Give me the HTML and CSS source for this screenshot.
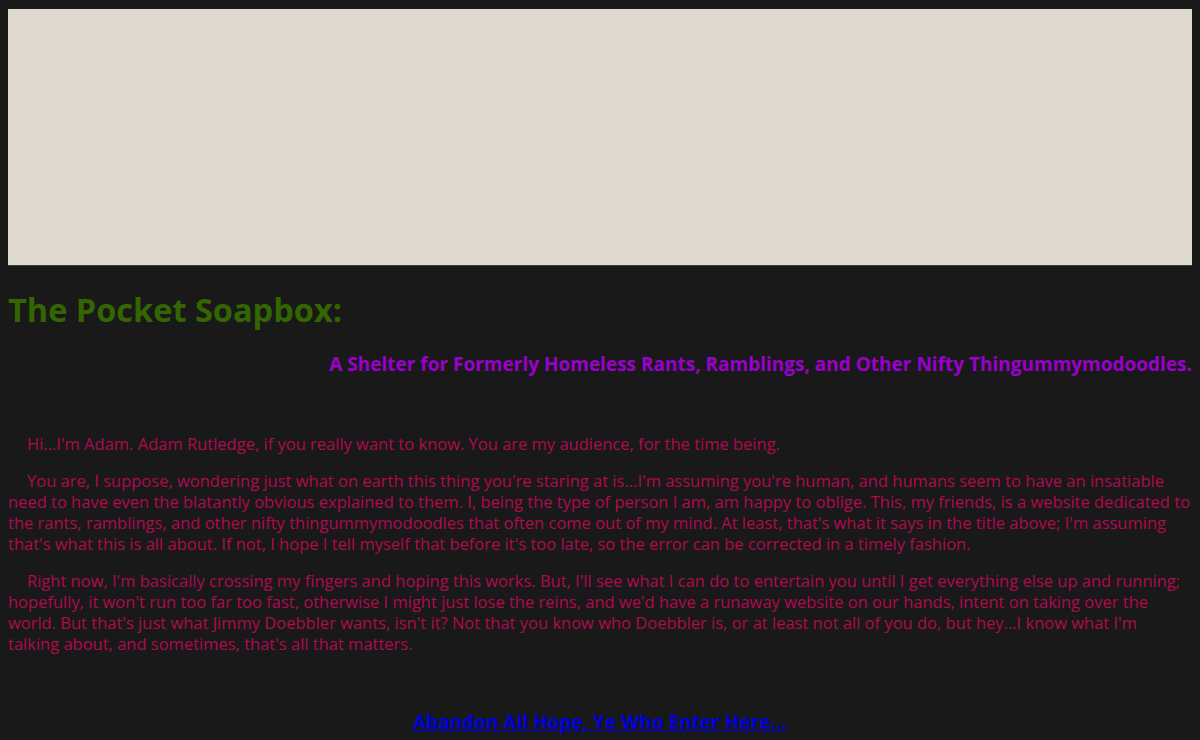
FILE: index.html
```html
<!DOCTYPE html>
<html>
<head>
<meta charset="utf-8">
<link rel="stylesheet" href="styles.css">
</head>
<body>
<div class="banner"></div>
<h1 class="title">The Pocket Soapbox:</h1>
<h3 class="subtitle">A Shelter for Formerly Homeless Rants, Ramblings, and Other Nifty Thingummymodoodles.</h3>
<div class="content">
<p>Hi...I'm Adam. Adam Rutledge, if you really want to know. You are my audience, for the time being.</p>
<p>You are, I suppose, wondering just what on earth this thing you're staring at is...I'm assuming you're human, and humans seem to have an insatiable need to have even the blatantly obvious explained to them. I, being the type of person I am, am happy to oblige. This, my friends, is a website dedicated to the rants, ramblings, and other nifty thingummymodoodles that often come out of my mind. At least, that's what it says in the title above; I'm assuming that's what this is all about. If not, I hope I tell myself that before it's too late, so the error can be corrected in a timely fashion.</p>
<p>Right now, I'm basically crossing my fingers and hoping this works. But, I'll see what I can do to entertain you until I get everything else up and running; hopefully, it won't run too far too fast, otherwise I might just lose the reins, and we'd have a runaway website on our hands, intent on taking over the world. But that's just what Jimmy Doebbler wants, isn't it? Not that you know who Doebbler is, or at least not all of you do, but hey...I know what I'm talking about, and sometimes, that's all that matters.</p>
</div>
<div class="enter"><a href="#">Abandon All Hope, Ye Who Enter Here...</a></div>
</body>
</html>
```
FILE: styles.css
```css
html, body {
  background: #191919;
}
body {
  margin: 9px 8px 8px 8px;
  font-family: "Segoe UI", "Open Sans", "Noto Sans", sans-serif;
  font-size: 16.5px;
  line-height: 21px;
  color: #b00a50;
}
.banner {
  height: 256px;
  background: #dedacf;
  border-bottom: 1px solid #3a3a36;
}
.title {
  font-size: 32.5px;
  line-height: 44px;
  font-weight: bold;
  color: #336600;
  margin: 22px 0 0 0;
}
.subtitle {
  font-size: 19px;
  line-height: 25px;
  font-weight: bold;
  color: #9900cc;
  text-align: right;
  margin: 20px 0 0 0;
}
.content {
  margin-top: 56px;
}
.content p {
  margin: 0 0 16px 0;
  text-indent: 19px;
}
.enter {
  margin-top: 56px;
  text-align: center;
  font-size: 19px;
  line-height: 24px;
  font-weight: bold;
}
.enter a {
  color: #0000dd;
  text-decoration: underline;
}
```
